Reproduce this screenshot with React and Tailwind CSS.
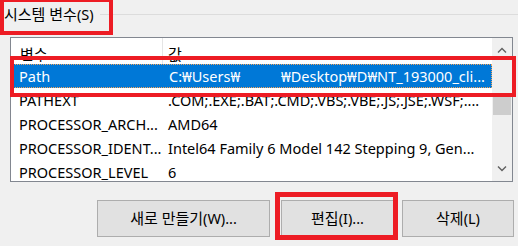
const font = { fontFamily: "'Noto Sans', 'Noto Sans CJK KR', sans-serif" };

const rows = [
  { name: 'PATHEXT', value: '.COM;.EXE;.BAT;.CMD;.VBS;.VBE;.JS;.JSE;.WSF;....' },
  { name: 'PROCESSOR_ARCH...', value: 'AMD64' },
  { name: 'PROCESSOR_IDENT...', value: 'Intel64 Family 6 Model 142 Stepping 9, Gen...' },
  { name: 'PROCESSOR_LEVEL', value: '6' },
];

const Chevron = ({ up }) => (
  <svg width="10" height="6" viewBox="0 0 10 6" fill="none">
    <path
      d={up ? 'M1 5.5 L5 1.5 L9 5.5' : 'M1 0.5 L5 4.5 L9 0.5'}
      stroke="#606060"
      strokeWidth="1.4"
    />
  </svg>
);

// korean text is a bit larger than the latin ui font
const Ko = ({ children }) => <span className="text-[15px]">{children}</span>;

export default function App() {
  return (
    <div className="relative w-[518px] h-[246px] overflow-hidden bg-[#f0f0f0] text-[14.5px] text-black leading-none" style={font}>
      {/* group title */}
      <div className="flex items-center h-[28px]">
        <span className="pl-[4px] pr-[6px]"><Ko>시스템 변수</Ko>(S)</span>
        <div className="flex-1 h-px bg-[#dcdcdc]" />
      </div>

      {/* list view */}
      <div className="ml-[10px] mt-[9px] w-[503px] h-[145px] border border-[#828790] bg-white flex">
        <div className="flex-1 overflow-hidden">
          <div className="flex h-[26px] items-center">
            <div className="w-[151px] pl-[9px] pt-[7px]"><Ko>변수</Ko></div>
            <div className="w-px h-full bg-[#e5e5e5]" />
            <div className="pl-[5px] pt-[7px]"><Ko>값</Ko></div>
          </div>
          <div className="flex h-[24px] items-center bg-[#0078d7] text-white border border-dotted border-[#f3a45c]">
            <div className="w-[151px] pl-[7px]">Path</div>
            <div className="pl-[6px] flex whitespace-nowrap">
              <span className="w-[112px]">C:₩Users₩</span>
              <span>₩Desktop₩D₩NT_193000_cli...</span>
            </div>
          </div>
          {rows.map((r) => (
            <div key={r.name} className="flex h-[24px] items-center whitespace-nowrap">
              <div className="w-[151px] pl-[8px] shrink-0">{r.name}</div>
              <div className="pl-[6px]">{r.value}</div>
            </div>
          ))}
        </div>
        <div className="w-[20px] bg-[#f0f0f0] flex flex-col">
          <div className="h-[24px] flex items-center justify-center">
            <Chevron up />
          </div>
          <div className="h-[33px]" />
          <div className="h-[20px] mx-px bg-[#cdcdcd]" />
          <div className="flex-1" />
          <div className="h-[24px] flex items-center justify-center">
            <Chevron />
          </div>
        </div>
      </div>

      {/* buttons */}
      <div className="flex mt-[18px] ml-[97px]">
        <button className="w-[173px] h-[37px] bg-[#e1e1e1] border border-[#adadad]"><Ko>새로 만들기</Ko>(W)...</button>
        <button className="ml-[11px] w-[113px] h-[37px] bg-[#e1e1e1] border border-[#adadad]"><Ko>편집</Ko>(I)...</button>
        <button className="ml-[8px] w-[112px] h-[37px] bg-[#e1e1e1] border border-[#adadad]"><Ko>삭제</Ko>(L)</button>
      </div>

      {/* red annotation boxes */}
      <div className="absolute left-0 top-[-2px] w-[113px] h-[37px] border-[4px] border-[#ed1c24]" />
      <div className="absolute left-[10px] top-[56px] w-[506px] h-[41px] border-[4px] border-[#ed1c24]" />
      <div className="absolute left-[275px] top-[192px] w-[123px] h-[48px] border-[5px] border-[#ed1c24]" />
    </div>
  );
}
